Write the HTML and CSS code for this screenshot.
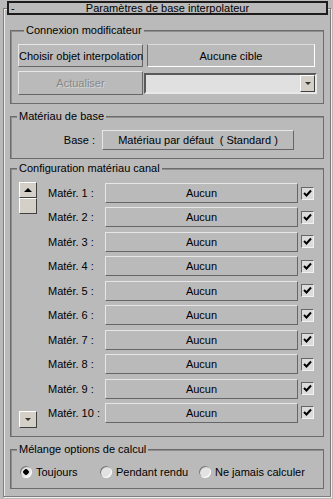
FILE: index.html
```html
<!DOCTYPE html>
<html lang="fr">
<head>
    <meta charset="UTF-8">
    <title>Paramètres de base interpolateur</title>
    <link rel="stylesheet" href="styles.css">
</head>
<body>
    <div class="rollout">
        <div class="title">
            <span class="collapse">-</span>
            <span class="title-text">Paramètres de base interpolateur</span>
            <span></span>
        </div>

        <!-- Connexion modificateur -->
        <div class="group g-connexion">
            <div class="legend">Connexion modificateur</div>
            <div class="conn-row">
                <button class="btn">Choisir objet interpolation</button>
                <div class="target">Aucune cible</div>
            </div>
            <div class="conn-row second">
                <button class="btn disabled">Actualiser</button>
                <div class="combo">
                    <div class="combo-field"></div>
                    <div class="combo-arrow"><span class="tri-down small"></span></div>
                </div>
            </div>
        </div>

        <!-- Matériau de base -->
        <div class="group g-base">
            <div class="legend">Matériau de base</div>
            <div class="base-row">
                <span class="base-label">Base :</span>
                <button class="btn">Matériau par défaut &nbsp;( Standard )</button>
            </div>
        </div>

        <!-- Configuration matériau canal -->
        <div class="group g-canal">
            <div class="legend">Configuration matériau canal</div>
            <div class="channels">
                <div class="spinner">
                    <div class="spin-top">
                        <button class="spin-btn"><span class="tri-up"></span></button>
                        <button class="spin-btn"></button>
                    </div>
                    <button class="spin-btn down"><span class="tri-down small"></span></button>
                </div>
                <div class="rows" id="rows"></div>
            </div>
        </div>

        <!-- Mélange options de calcul -->
        <div class="group g-calc">
            <div class="legend">Mélange options de calcul</div>
            <div class="radios">
                <label class="opt opt-1"><span class="radio on"></span>Toujours</label>
                <label class="opt opt-2"><span class="radio"></span>Pendant rendu</label>
                <label class="opt"><span class="radio"></span>Ne jamais calculer</label>
            </div>
        </div>
    </div>

    <script>
        const rows = document.getElementById('rows');
        const check = '<svg width="11" height="11" viewBox="0 0 11 11"><polyline points="2,5 4.5,7.5 9,2.5" fill="none" stroke="#000" stroke-width="2"/></svg>';

        for (let i = 1; i <= 10; i++) {
            const row = document.createElement('div');
            row.className = 'row';
            row.innerHTML =
                '<span class="row-label">Matér. ' + i + ' :</span>' +
                '<button class="btn slot">Aucun</button>' +
                '<span class="check">' + check + '</span>';
            rows.appendChild(row);
        }
    </script>
</body>
</html>
```

FILE: styles.css
```css
body {
    margin: 0;
    width: 333px;
    height: 499px;
    overflow: hidden;
    background-color: #bababa;
    font-family: "Liberation Sans", Arial, sans-serif;
    font-size: 11px;
    color: #000;
}

/* Cadre du rollout */
.rollout {
    box-sizing: border-box;
    height: 489px;
    margin: 8px 2px 0 3px;
    border: 1px solid #7e7e7e;
    box-shadow: inset 1px 1px 0 #ececec, 1px 1px 0 #ececec;
}

.title {
    box-sizing: border-box;
    height: 14px;
    margin: -8px 2px 0 3px;
    border: 2px solid #1c1c1c;
    background-color: #bababa;
    display: grid;
    grid-template-columns: 1fr auto 1fr;
    align-items: center;
    line-height: 10px;
}

.collapse {
    padding-left: 2px;
}

/* Groupes */
.group {
    margin: 0 6px;
    border: 1px solid #6c6c6c;
    box-shadow: inset 1px 1px 0 #8e8e8e;
}

.legend {
    width: fit-content;
    margin: -7px 0 0 6px;
    padding: 0 2px;
    line-height: 13px;
    background-color: #bababa;
}

.g-connexion {
    margin-top: 15px;
    padding: 0 8px 8px 7px;
}

.g-base {
    margin-top: 12px;
    padding-bottom: 8px;
}

.g-canal {
    margin-top: 9px;
    padding-bottom: 8px;
}

.g-calc {
    margin-top: 12px;
    padding-bottom: 10px;
}

/* Boutons */
.btn {
    font: inherit;
    color: #000;
    background-color: #bababa;
    border: 1px solid;
    border-color: #e6e6e6 #666 #666 #e6e6e6;
    padding: 0;
    white-space: nowrap;
    overflow: visible;
}

.btn.disabled {
    color: #878787;
    text-shadow: 1px 1px 0 #d6d6d6;
}

.conn-row {
    display: grid;
    grid-template-columns: 125px 168px;
    column-gap: 4px;
    height: 23px;
    margin-top: 7px;
}

.conn-row.second {
    grid-template-columns: 125px 173px;
    column-gap: 1px;
    height: 24px;
    margin-top: 4px;
}

.target {
    display: flex;
    align-items: center;
    justify-content: center;
    border: 1px solid;
    border-color: #dcdcdc #fff #fff #6a6a6a;
}

.combo {
    display: flex;
    box-sizing: border-box;
    height: 21px;
    margin-top: 2px;
    border: 2px solid;
    border-color: #5a5a5a #e8e8e8 #e8e8e8 #5a5a5a;
    background-color: #e0e0e0;
}

.combo-field {
    flex: 1;
}

.combo-arrow {
    box-sizing: border-box;
    width: 15px;
    display: flex;
    align-items: center;
    justify-content: center;
    background-color: #d4d0c8;
    border: 1px solid;
    border-color: #fff #404040 #404040 #fff;
}

.tri-up {
    width: 0;
    height: 0;
    border-left: 4px solid transparent;
    border-right: 4px solid transparent;
    border-bottom: 4px solid #000;
}

.tri-down {
    width: 0;
    height: 0;
    border-left: 4px solid transparent;
    border-right: 4px solid transparent;
    border-top: 4px solid #000;
}

.tri-down.small {
    border-left-width: 3px;
    border-right-width: 3px;
    border-top-width: 3px;
    border-top-color: #333;
}

/* Matériau de base */
.base-row {
    display: grid;
    grid-template-columns: 91px 192px;
    height: 20px;
    margin-top: 7px;
}

.base-label {
    align-self: center;
    text-align: right;
    padding-right: 7px;
}

/* Canaux */
.channels {
    display: flex;
    margin-top: 7px;
    padding: 0 9px 0 8px;
}

.spinner {
    width: 18px;
    height: 246px;
    display: flex;
    flex-direction: column;
    justify-content: space-between;
}

.spin-top {
    display: flex;
    flex-direction: column;
}

.spin-btn {
    box-sizing: border-box;
    width: 18px;
    height: 16px;
    padding: 0;
    display: flex;
    align-items: center;
    justify-content: center;
    background-color: #d4d0c8;
    border: 1px solid;
    border-color: #fff #404040 #404040 #fff;
}

.spin-btn.down {
    height: 17px;
}

.rows {
    display: flex;
    flex-direction: column;
    gap: 4.44px;
    margin: 1px 0 0 11px;
}

.row {
    display: grid;
    grid-template-columns: 57px 193px 16px;
    align-items: center;
    height: 20px;
}

.slot {
    height: 20px;
}

.check {
    box-sizing: border-box;
    justify-self: end;
    width: 13px;
    height: 13px;
    display: flex;
    align-items: center;
    justify-content: center;
    background-color: #dcdcdc;
    border: 1px solid;
    border-color: #666 #f2f2f2 #f2f2f2 #666;
}

/* Options de calcul */
.radios {
    display: flex;
    align-items: center;
    height: 13px;
    margin-top: 9px;
    padding-left: 9px;
}

.opt {
    display: flex;
    align-items: center;
    gap: 4px;
}

.opt-1 {
    width: 80px;
}

.opt-2 {
    width: 99px;
}

.radio {
    box-sizing: border-box;
    width: 12px;
    height: 12px;
    border-radius: 50%;
    background-color: #e2e2e2;
    box-shadow: inset 1px 1px 0 #777, inset -1px -1px 0 #fafafa;
}

.radio.on {
    background: radial-gradient(circle, #000 2.5px, #e2e2e2 3px);
}
```
